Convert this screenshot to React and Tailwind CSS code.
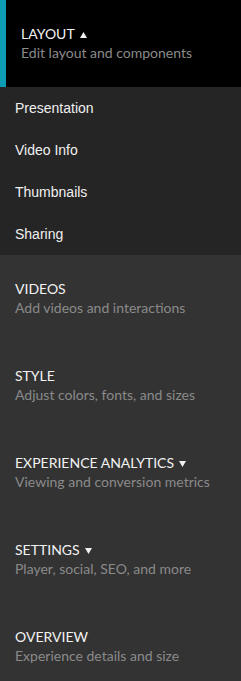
import React from "react";

const Tri = ({ up }) => (
  <svg width="7" height="6" viewBox="0 0 7 6" className="ml-[5px] inline-block" style={{ verticalAlign: "1px" }}>
    {up ? <polygon points="3.5,0 7,6 0,6" fill="#f0f0f0" /> : <polygon points="0,0 7,0 3.5,6" fill="#f0f0f0" />}
  </svg>
);

const Section = ({ title, sub, tri }) => (
  <div className="h-[87px] bg-[#333333] pl-[15px] pt-6 shrink-0">
    <div className="text-[14px] leading-[19px] text-[#f2f2f2] whitespace-nowrap">
      {title}
      {tri && <Tri />}
    </div>
    <div className="text-[14px] leading-[19px] text-[#8a8a8a] whitespace-nowrap">{sub}</div>
  </div>
);

export default function App() {
  return (
    <div className="w-[241px] h-[681px] overflow-hidden bg-[#333333] flex flex-col" style={{ fontFamily: "Lato, 'Noto Sans', sans-serif" }}>
      <div className="h-[87px] bg-black border-l-[6px] border-[#0e9bb4] pl-[15px] pt-6 shrink-0">
        <div className="text-[14px] leading-[19px] text-[#f2f2f2]">
          LAYOUT
          <Tri up />
        </div>
        <div className="text-[14px] leading-[19px] text-[#8a8a8a]">Edit layout and components</div>
      </div>
      <div className="bg-[#252525] flex flex-col shrink-0" style={{ fontFamily: "'Liberation Sans', Arial, sans-serif" }}>
        {["Presentation", "Video Info", "Thumbnails", "Sharing"].map((t) => (
          <div key={t} className="h-[42px] flex items-center pl-[15px] text-[14px] text-[#f0f0f0]">
            {t}
          </div>
        ))}
      </div>
      <Section title="VIDEOS" sub="Add videos and interactions" />
      <Section title="STYLE" sub="Adjust colors, fonts, and sizes" />
      <Section title="EXPERIENCE ANALYTICS" sub="Viewing and conversion metrics" tri />
      <Section title="SETTINGS" sub="Player, social, SEO, and more" tri />
      <Section title="OVERVIEW" sub="Experience details and size" />
    </div>
  );
}
